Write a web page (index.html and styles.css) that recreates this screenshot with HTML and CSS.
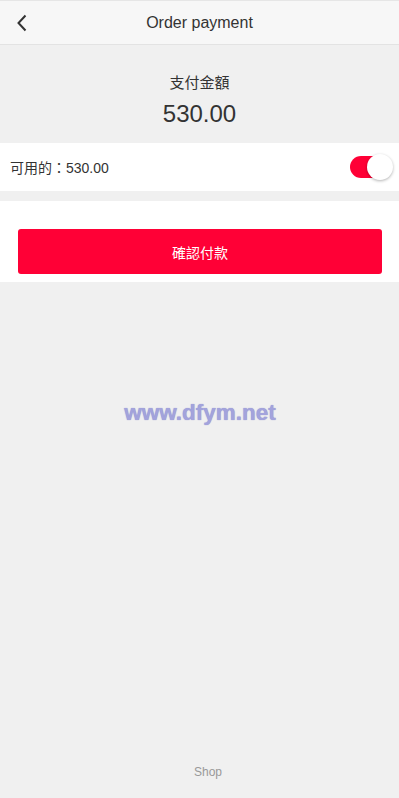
FILE: index.html
```html
<!DOCTYPE html>
<html lang="zh-Hant">
<head>
<meta charset="utf-8">
<title>Order payment</title>
<link rel="stylesheet" href="styles.css">
</head>
<body>
<div class="page">
  <header class="topbar">
    <span class="back">
      <svg width="12" height="18" viewBox="0 0 12 18"><path d="M9.5 1.5 L2.5 9 L9.5 16.5" fill="none" stroke="#333" stroke-width="2"/></svg>
    </span>
    <h1 class="title">Order payment</h1>
  </header>
  <section class="amount">
    <div class="amount-label">支付金額</div>
    <div class="amount-value">530.00</div>
  </section>
  <section class="balance">
    <span class="balance-text">可用的：530.00</span>
    <span class="switch"><span class="knob"></span></span>
  </section>
  <section class="action">
    <button class="pay">確認付款</button>
  </section>
  <div class="fill">
    <div class="watermark">www.dfym.net</div>
    <div class="shop">Shop</div>
  </div>
</div>
</body>
</html>
```

FILE: styles.css
```css
* { box-sizing: border-box; }
html, body { margin: 0; padding: 0; }
body {
  font-family: "Liberation Sans", Arial, "Noto Sans CJK TC", sans-serif;
  background: #f0f0f0;
  color: #333;
  width: 399px;
  height: 798px;
  overflow: hidden;
}
.page {
  display: flex;
  flex-direction: column;
  height: 798px;
}
.topbar {
  height: 45px;
  flex: none;
  background: #f7f7f7;
  border-top: 1px solid #e6e6e6;
  border-bottom: 1px solid #e3e3e3;
  display: flex;
  align-items: center;
  justify-content: center;
  position: relative;
}
.back {
  position: absolute;
  left: 16px;
  top: 13px;
  display: flex;
}
.title {
  margin: 0;
  font-size: 16px;
  font-weight: normal;
  color: #333;
}
.amount {
  height: 98px;
  flex: none;
  display: flex;
  flex-direction: column;
  align-items: center;
  padding-top: 28px;
}
.amount-label {
  font-size: 15px;
  line-height: 20px;
  color: #333;
}
.amount-value {
  font-size: 24px;
  line-height: 30px;
  margin-top: 6px;
  color: #333;
}
.balance {
  height: 48px;
  flex: none;
  background: #fff;
  display: flex;
  align-items: center;
  justify-content: space-between;
  padding: 0 7px 0 10px;
}
.balance-text {
  font-size: 14px;
  color: #333;
}
.switch {
  width: 42px;
  height: 22px;
  border-radius: 11px;
  background: #ff0036;
  position: relative;
}
.knob {
  position: absolute;
  right: -1px;
  top: -2px;
  width: 26px;
  height: 26px;
  border-radius: 50%;
  background: #fff;
  box-shadow: 0 1px 3px rgba(0,0,0,0.3);
}
.action {
  margin-top: 10px;
  flex: none;
  height: 81px;
  background: #fff;
  padding: 28px 17px 0 18px;
}
.pay {
  display: block;
  width: 100%;
  height: 45px;
  border: none;
  border-radius: 3px;
  background: #ff0036;
  color: #fff;
  font-family: inherit;
  font-size: 14px;
  padding: 0;
}
.fill {
  flex: 1;
  display: flex;
  flex-direction: column;
  align-items: center;
}
.watermark {
  margin-top: 118px;
  margin-left: 1px;
  font-size: 22.5px;
  font-weight: bold;
  color: #a3a3dc;
  text-shadow: 0 0 1px #8a8ac8;
  line-height: 26px;
}
.shop {
  margin-top: auto;
  margin-bottom: 19px;
  margin-left: 17px;
  font-size: 12px;
  color: #999;
}
```
